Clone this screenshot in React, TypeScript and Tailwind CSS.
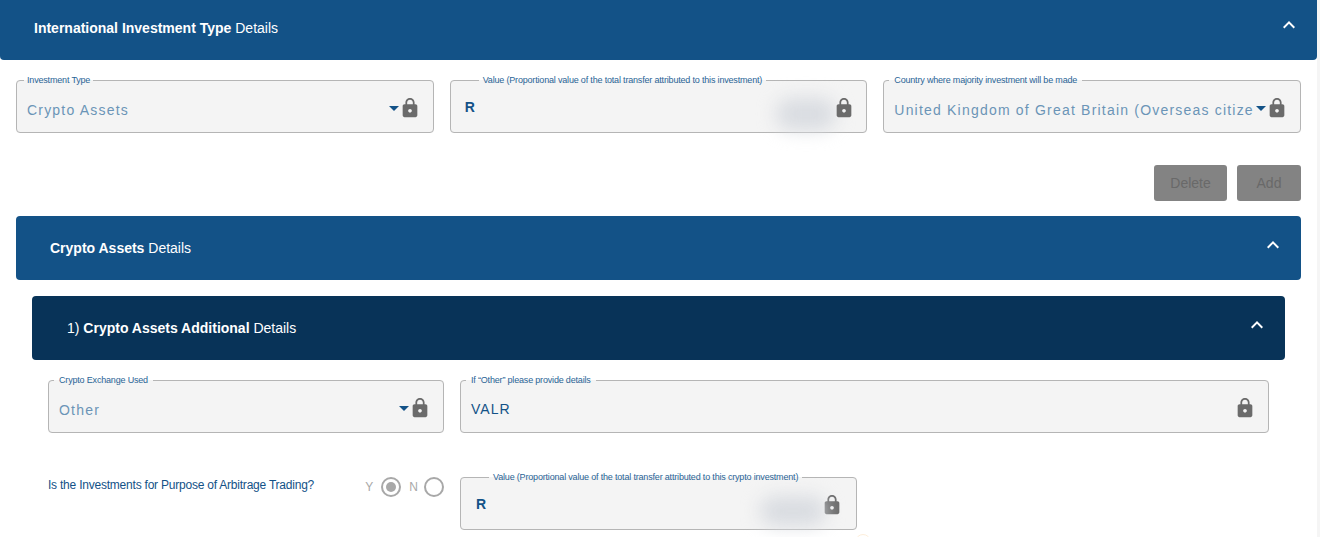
import type { ReactNode } from "react";

const LOCK =
  "M18 8h-1V6c0-2.76-2.24-5-5-5S7 3.24 7 6v2H6c-1.1 0-2 .9-2 2v10c0 1.1.9 2 2 2h12c1.1 0 2-.9 2-2V10c0-1.1-.9-2-2-2zm-6 9c-1.1 0-2-.9-2-2s.9-2 2-2 2 .9 2 2-.9 2-2 2zm3.1-9H8.9V6c0-1.71 1.39-3.1 3.1-3.1 1.71 0 3.1 1.39 3.1 3.1v2z";

function LockIcon() {
  return (
    <svg viewBox="0 0 24 24" className="h-[22px] w-[22px] shrink-0 fill-[#6b6b6b]">
      <path d={LOCK} />
    </svg>
  );
}

function Chevron() {
  return (
    <svg viewBox="0 0 24 24" className="mb-[6px] h-6 w-6 fill-white">
      <path d="M12 8l-6 6 1.41 1.41L12 10.83l4.59 4.58L18 14z" />
    </svg>
  );
}

function Caret() {
  return <span className="mt-[2px] h-0 w-0 shrink-0 border-x-[5px] border-t-[5px] border-x-transparent border-t-[#135287]" />;
}

function Blur({ className }: { className: string }) {
  return <span className={`absolute rounded-full bg-[#d9dce1] blur-[9px] ${className}`} />;
}

interface FieldProps {
  label: string;
  labelClass: string;
  className?: string;
  inner: string;
  children: ReactNode;
}

function Field({ label, labelClass, className = "", inner, children }: FieldProps) {
  return (
    <fieldset className={`relative -mt-[6px] h-[59px] min-w-0 rounded-[4px] border border-[#b5b5b5] bg-[#f4f4f4] ${className}`}>
      <legend className={`h-3 text-[9px] leading-3 tracking-[-0.18px] text-[#2a6496] ${labelClass}`}>{label}</legend>
      <div className={`flex h-[43px] items-center ${inner}`}>{children}</div>
    </fieldset>
  );
}

function Header({ className, children }: { className: string; children: ReactNode }) {
  return (
    <div className={`flex items-center justify-between text-sm text-white ${className}`}>
      <div>{children}</div>
      <Chevron />
    </div>
  );
}

function SelectValue({ children }: { children: ReactNode }) {
  return (
    <span className="mr-[3px] mt-1 min-w-0 flex-1 overflow-hidden whitespace-nowrap text-sm tracking-[1.2px] text-[#6b94b7]">{children}</span>
  );
}

export default function App() {
  return (
    <div className="relative flex h-[537px] overflow-hidden bg-white font-['Liberation_Sans',Arial,sans-serif]">
      <main className="min-w-0 flex-1">
        <Header className="h-[60px] rounded-b-[4px] bg-[#135287] pb-1 pl-[34px] pr-4">
          <b className="font-bold">International Investment Type</b> Details
        </Header>

        <div className="mx-4 mt-5 grid grid-cols-3 gap-4">
          <Field label="Investment Type" labelClass="ml-[7px] px-[3px]" inner="pl-[10px] pr-[12px]">
            <SelectValue>Crypto Assets</SelectValue>
            <Caret />
            <LockIcon />
          </Field>
          <Field label="Value (Proportional value of the total transfer attributed to this investment)" labelClass="ml-[28px] px-[4px]" inner="pl-[14px] pr-[11px]">
            <span className="mb-[1px] flex-1 text-sm font-bold text-[#135287]">R</span>
            <Blur className="right-[30px] top-[12px] h-[32px] w-[60px]" />
            <span className="relative">
              <LockIcon />
            </span>
          </Field>
          <Field label="Country where majority investment will be made" labelClass="ml-[5px] px-[5px]" inner="pl-[10px] pr-[12px]">
            <SelectValue>United Kingdom of Great Britain (Overseas citizen)</SelectValue>
            <Caret />
            <LockIcon />
          </Field>
        </div>

        <div className="mx-4 mt-8 flex justify-end gap-[10px]">
          <button className="h-9 w-[73px] rounded-[3px] bg-[#838383] text-sm text-[#696969]">Delete</button>
          <button className="h-9 w-16 rounded-[3px] bg-[#838383] text-sm text-[#696969]">Add</button>
        </div>

        <Header className="mx-4 mt-[15px] h-16 rounded-[4px] bg-[#135287] pl-[34px] pr-[16px]">
          <b className="font-bold">Crypto Assets</b> Details
        </Header>

        <Header className="mx-8 mt-4 h-16 rounded-[4px] bg-[#083358] pl-[35px] pr-[16px]">
          1) <b className="font-bold">Crypto Assets Additional</b> Details
        </Header>

        <div className="ml-12 mr-12 mt-5 flex gap-4">
          <Field label="Crypto Exchange Used" labelClass="ml-[5px] px-[5px]" className="w-[396px]" inner="pl-[10px] pr-[12px]">
            <SelectValue>Other</SelectValue>
            <Caret />
            <LockIcon />
          </Field>
          <Field label="If “Other” please provide details" labelClass="ml-[5px] px-[5px]" className="flex-1" inner="pl-[10px] pr-[12px]">
            <span className="mt-[2px] flex-1 text-sm tracking-[1px] text-[#135287]">VALR</span>
            <LockIcon />
          </Field>
        </div>

        <div className="ml-12 mt-11 flex">
          <div className="flex h-[53px] w-[396px] items-start justify-between">
            <span className="text-xs leading-4 tracking-[-0.22px] text-[#135287]">Is the Investments for Purpose of Arbitrage Trading?</span>
            <div className="flex items-center text-xs text-[#a8a8a8]">
              <span className="mr-[8px]">Y</span>
              <span className="flex h-5 w-5 items-center justify-center rounded-full border-2 border-[#a8a8a8]">
                <span className="h-[10px] w-[10px] rounded-full bg-[#a8a8a8]" />
              </span>
              <span className="ml-2 mr-[6px]">N</span>
              <span className="h-5 w-5 rounded-full border-2 border-[#a8a8a8]" />
            </div>
          </div>
          <Field label="Value (Proportional value of the total transfer attributed to this crypto investment)" labelClass="ml-[28px] px-[4px]" className="ml-4 w-[397px]" inner="pl-[15px] pr-[13px]">
            <span className="mb-[1px] flex-1 text-sm font-bold text-[#135287]">R</span>
            <LockIcon />
            <Blur className="right-[30px] top-[13px] h-[30px] w-[66px]" />
          </Field>
        </div>
      </main>
      <div className="w-[3px] shrink-0 bg-[#f5f5f5]" />
      <span className="absolute left-[855px] top-[534px] h-4 w-4 rounded-full border border-[#fdeedb]" />
    </div>
  );
}
